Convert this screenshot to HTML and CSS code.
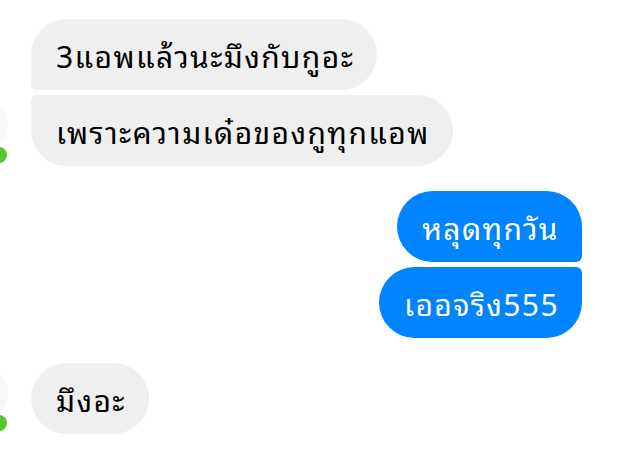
FILE: index.html
```html
<!DOCTYPE html>
<html lang="th">
<head>
<meta charset="utf-8">
<link rel="stylesheet" href="styles.css">
</head>
<body>
<div class="chat">
  <div class="group in">
    <div class="bubble gray first">3แอพแล้วนะมึงกับกูอะ</div>
    <div class="bubble gray last">เพราะความเด๋อของกูทุกแอพ</div>
    <span class="avatar"></span>
    <span class="dot"></span>
  </div>
  <div class="group out">
    <div class="bubble blue first">หลุดทุกวัน</div>
    <div class="bubble blue last">เออจริง555</div>
  </div>
  <div class="group in">
    <div class="bubble gray single">มึงอะ</div>
    <span class="avatar"></span>
    <span class="dot"></span>
  </div>
</div>
</body>
</html>
```
FILE: styles.css
```css
html, body {
  margin: 0;
  padding: 0;
  background: #ffffff;
}
.chat {
  display: flex;
  flex-direction: column;
  gap: 25px;
  padding: 19px 48px 0 31px;
  font-family: "Noto Sans Thai Looped", "Loma", "Garuda", "Noto Sans Thai", "Noto Sans", sans-serif;
}
.group {
  position: relative;
  display: flex;
  flex-direction: column;
  gap: 5px;
}
.group.in { align-items: flex-start; }
.group.out { align-items: flex-end; }
.bubble {
  box-sizing: border-box;
  height: 71px;
  display: flex;
  align-items: center;
  padding: 0 23px 0 25px;
  font-size: 30px;
  letter-spacing: 1.4px;
  line-height: 1;
  border-radius: 36px;
  white-space: nowrap;
}
.gray { background: #efefef; color: #000; }
.blue { background: #0084ff; color: #fff; }
.gray.first { border-bottom-left-radius: 6px; }
.gray.last { border-top-left-radius: 6px; }
.blue.first { border-bottom-right-radius: 6px; }
.blue.last { border-top-right-radius: 6px; }
.avatar {
  position: absolute;
  left: -77px;
  bottom: 14px;
  width: 54px;
  height: 54px;
  border-radius: 50%;
  background: #f9f9f9;
}
.dot {
  position: absolute;
  left: -40px;
  bottom: 3px;
  width: 16px;
  height: 16px;
  border-radius: 50%;
  background: #55c531;
}
```
